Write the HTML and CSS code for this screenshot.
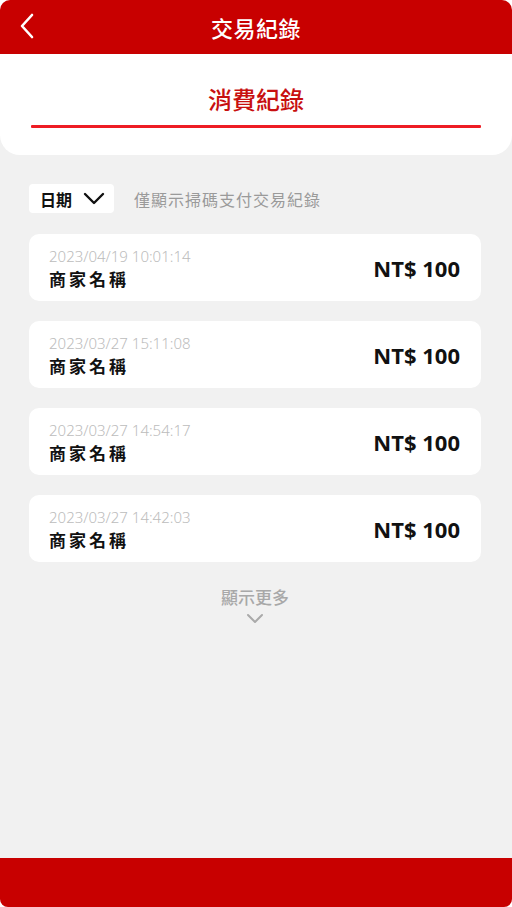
FILE: index.html
```html
<!DOCTYPE html>
<html lang="zh-Hant">
<head>
<meta charset="utf-8">
<link rel="stylesheet" href="styles.css">
</head>
<body>
<div class="app">
  <header class="topbar">
    <svg class="back" width="16" height="26" viewBox="0 0 16 26"><path d="M13 2 L3 13 L13 24" fill="none" stroke="#fff" stroke-width="2.6" stroke-linecap="round" stroke-linejoin="round"/></svg>
    <h1 class="title">交易紀錄</h1>
  </header>
  <section class="tabpanel">
    <div class="tab">消費紀錄</div>
    <div class="tabline"></div>
  </section>
  <main class="content">
    <div class="filter">
      <div class="datebtn">日期
        <svg width="22" height="13" viewBox="0 0 22 13"><path d="M2 2 L11 11 L20 2" fill="none" stroke="#111" stroke-width="2.4" stroke-linecap="round" stroke-linejoin="round"/></svg>
      </div>
      <span class="note">僅顯示掃碼支付交易紀錄</span>
    </div>
    <div class="list">
      <div class="card">
        <div class="info"><div class="time">2023/04/19 10:01:14</div><div class="name">商家名稱</div></div>
        <div class="amount">NT$ 100</div>
      </div>
      <div class="card">
        <div class="info"><div class="time">2023/03/27 15:11:08</div><div class="name">商家名稱</div></div>
        <div class="amount">NT$ 100</div>
      </div>
      <div class="card">
        <div class="info"><div class="time">2023/03/27 14:54:17</div><div class="name">商家名稱</div></div>
        <div class="amount">NT$ 100</div>
      </div>
      <div class="card">
        <div class="info"><div class="time">2023/03/27 14:42:03</div><div class="name">商家名稱</div></div>
        <div class="amount">NT$ 100</div>
      </div>
    </div>
    <div class="more">
      <span>顯示更多</span>
      <svg width="18" height="11" viewBox="0 0 18 11"><path d="M2 2 L9 9 L16 2" fill="none" stroke="#aaa" stroke-width="2" stroke-linecap="round" stroke-linejoin="round"/></svg>
    </div>
  </main>
  <footer class="bottombar"></footer>
</div>
</body>
</html>
```
FILE: styles.css
```css
html, body { margin: 0; padding: 0; background: #fff; }
body { font-family: "Noto Sans CJK TC", "Noto Sans", sans-serif; }
.app {
  width: 512px; height: 907px;
  display: flex; flex-direction: column;
  background: #f1f1f1;
  border-radius: 10px 10px 8px 8px;
  overflow: hidden;
}
.topbar {
  height: 54px; flex: none;
  background: #c80000;
  display: flex; align-items: center; justify-content: center;
  position: relative;
}
.back { position: absolute; left: 19px; top: 13px; }
.title { margin: 0; color: #fff; font-size: 22px; font-weight: 500; letter-spacing: 0.5px; line-height: 30px; }
.tabpanel {
  flex: none; height: 101px;
  background: #fff;
  border-radius: 0 0 20px 20px;
  display: flex; flex-direction: column; align-items: center;
  padding: 0 31px; box-sizing: border-box;
}
.tab { color: #c81010; font-size: 24px; font-weight: 500; margin-top: 28px; line-height: 34px; }
.tabline { align-self: stretch; height: 3px; background: #ee1c24; margin-top: 9px; border-radius: 1px; }
.content { flex: 1; padding: 29px 31px 0 29px; display: flex; flex-direction: column; }
.filter { display: flex; align-items: center; gap: 20px; height: 29px; }
.datebtn {
  background: #fff; height: 29px; width: 85px; box-sizing: border-box;
  border-radius: 4px; padding: 0 9px 0 11px;
  display: flex; align-items: center; justify-content: space-between;
  font-size: 16px; font-weight: 700; color: #111;
}
.note { color: #9a9a9a; font-size: 16px; letter-spacing: 1px; font-weight: 400; }
.list { display: flex; flex-direction: column; gap: 20px; margin-top: 21px; }
.card {
  background: #fff; height: 67px; border-radius: 10px;
  display: flex; align-items: center; justify-content: space-between;
  padding: 0 21px 0 20px; box-sizing: border-box;
}
.info { display: flex; flex-direction: column; padding-top: 2px; }
.time { color: #bcbcbc; font-size: 15px; line-height: 20px; font-family: "Noto Sans", sans-serif; font-weight: 300; }
.name { color: #111; font-size: 17px; font-weight: 700; letter-spacing: 3px; line-height: 24px; margin-top: 1px; }
.amount { color: #111; font-size: 22px; font-weight: 700; font-family: "Open Sans", "Noto Sans", sans-serif; margin-top: 1px; }
.more { display: flex; flex-direction: column; align-items: center; margin-top: 24px; color: #a8a8a8; font-size: 17px; font-weight: 500; }
.more span { line-height: 22px; }
.more svg { margin-top: 5px; }
.bottombar { flex: none; height: 49px; background: #c80000; }
```
